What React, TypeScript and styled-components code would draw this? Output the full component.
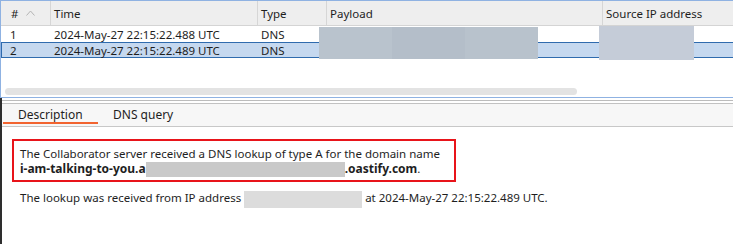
import React from "react";
import styled, { createGlobalStyle } from "styled-components";

const GlobalStyle = createGlobalStyle`
  html, body {
    margin: 0;
    padding: 0;
    background: #ffffff;
  }
  body {
    width: 733px;
    height: 244px;
    overflow: hidden;
    font-family: "Noto Sans", "Open Sans", sans-serif;
    color: #1e1e1e;
  }
`;

const Page = styled.div`
  display: flex;
  flex-direction: column;
  height: 244px;
`;

const TablePanel = styled.div`
  position: relative;
  box-sizing: border-box;
  height: 98px;
  display: flex;
  flex-direction: column;
  border-top: 1px solid #8fb2e2;
  border-left: 1px solid #8fb2e2;
  border-bottom: 1px solid #8fb2e2;
`;

const cols = "49px 207px 69px 276px 1fr";

const HeaderRow = styled.div`
  display: grid;
  grid-template-columns: ${cols};
  height: 24px;
  background: #eeeeee;
  border-bottom: 1px solid #d4d4d4;
  font-size: 11.5px;
`;

const HeaderCell = styled.div`
  display: flex;
  align-items: center;
  gap: 8px;
  padding-left: 10px;
  &:not(:first-child) {
    border-left: 1px solid #d6d6d6;
    padding-left: 3px;
  }
`;

const Row = styled.div<{ $selected?: boolean }>`
  display: grid;
  grid-template-columns: ${cols};
  height: 16px;
  align-items: center;
  font-size: 11.5px;
  background: ${(p) => (p.$selected ? "#c5d8ef" : "transparent")};
  box-shadow: ${(p) =>
    p.$selected
      ? "inset 0 1px #2f6bae, inset 0 -1px #2f6bae, inset 1px 0 #2f6bae"
      : "none"};
`;

const Cell = styled.div<{ $first?: boolean }>`
  padding-left: ${(p) => (p.$first ? "9px" : "4px")};
  white-space: nowrap;
`;

const Spacer = styled.div`
  flex: 1;
`;

const ScrollThumb = styled.div`
  margin: 0 0 2px 4px;
  width: 572px;
  height: 7px;
  border-radius: 4px;
  background: #e3e3e3;
`;

const Redact = styled.div<{ $color: string }>`
  position: absolute;
  background: ${(p) => p.$color};
`;

const Lower = styled.div`
  flex: 1;
  display: flex;
  flex-direction: column;
  border-left: 2px solid #2e2e2e;
`;

const Divider = styled.div`
  margin-top: 2px;
  height: 2px;
  border-top: 1px solid #bcbcbc;
  border-bottom: 1px solid #c2c2c2;
`;

const TabBar = styled.div`
  display: flex;
  height: 22px;
  padding-left: 1px;
  background: #f7f7f7;
  border-bottom: 1px solid #c8c8c8;
`;

const Tab = styled.div<{ $active?: boolean }>`
  box-sizing: border-box;
  height: 20px;
  width: ${(p) => (p.$active ? "95px" : "auto")};
  padding: 2px 15px 0;
  display: flex;
  align-items: center;
  font-size: 12px;
  border-bottom: 2px solid ${(p) => (p.$active ? "#f26430" : "transparent")};
`;

const Content = styled.div`
  padding: 12px 0 0 10px;
  font-size: 11.5px;
  line-height: 15px;
`;

const Highlight = styled.div`
  box-sizing: border-box;
  width: 444px;
  padding: 5px 6px 3px;
  border: 2px solid #e8141a;
  white-space: nowrap;
`;

const Para = styled.div`
  padding: 8px 8px 0;
  white-space: nowrap;
`;

const Bold = styled.b`
  font-weight: 700;
  font-size: 12px;
`;

const Blank = styled.span<{ $w: number; $color: string; $h: number }>`
  display: inline-block;
  width: ${(p) => p.$w}px;
  height: ${(p) => p.$h}px;
  vertical-align: middle;
  background: ${(p) => p.$color};
`;

const SortArrow = () => (
  <svg width="9" height="6" viewBox="0 0 9 6">
    <path d="M0.5 5.5 L4.5 1 L8.5 5.5" fill="none" stroke="#b4b4b4" strokeWidth="1" />
  </svg>
);

const rows = [
  { n: "1", time: "2024-May-27 22:15:22.488 UTC", type: "DNS" },
  { n: "2", time: "2024-May-27 22:15:22.489 UTC", type: "DNS", selected: true },
];

export default function App() {
  return (
    <Page>
      <GlobalStyle />
      <TablePanel>
        <HeaderRow>
          <HeaderCell>
            # <SortArrow />
          </HeaderCell>
          <HeaderCell>Time</HeaderCell>
          <HeaderCell>Type</HeaderCell>
          <HeaderCell>Payload</HeaderCell>
          <HeaderCell>Source IP address</HeaderCell>
        </HeaderRow>
        {rows.map((r) => (
          <Row key={r.n} $selected={r.selected}>
            <Cell $first>{r.n}</Cell>
            <Cell>{r.time}</Cell>
            <Cell>{r.type}</Cell>
            <Cell />
            <Cell />
          </Row>
        ))}
        <Spacer />
        <ScrollThumb />
        <Redact $color="#b9c3cd" style={{ left: 318, top: 26, width: 73, height: 32 }} />
        <Redact $color="#b4bec9" style={{ left: 391, top: 26, width: 73, height: 32 }} />
        <Redact $color="#b8c2cc" style={{ left: 464, top: 26, width: 73, height: 32 }} />
        <Redact $color="#c5ccd8" style={{ left: 598, top: 25, width: 95, height: 34 }} />
      </TablePanel>
      <Lower>
        <Divider />
        <TabBar>
          <Tab $active>Description</Tab>
          <Tab>DNS query</Tab>
        </TabBar>
        <Content>
          <Highlight>
            The Collaborator server received a DNS lookup of type A for the domain name
            <br />
            <Bold>i-am-talking-to-you.a</Bold>
            <Blank $w={199} $h={15} $color="#c9c9c9" />
            <Bold>.oastify.com</Bold>.
          </Highlight>
          <Para>
            The lookup was received from IP address <Blank $w={118} $h={17} $color="#dcdcdc" /> at
            2024-May-27 22:15:22.489 UTC.
          </Para>
        </Content>
      </Lower>
    </Page>
  );
}
